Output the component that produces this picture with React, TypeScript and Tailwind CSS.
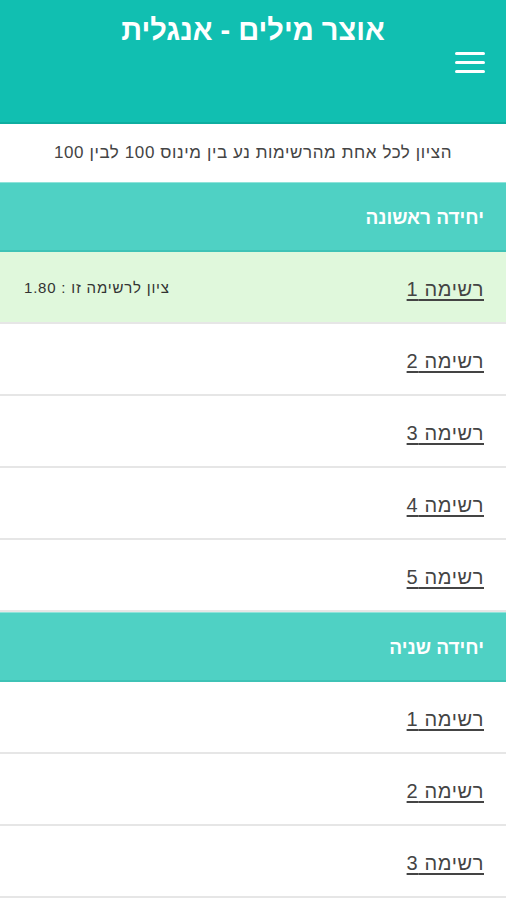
const units = [
  { name: "יחידה ראשונה", lists: [1, 2, 3, 4, 5] },
  { name: "יחידה שניה", lists: [1, 2, 3] },
];

function App() {
  return (
    <div
      dir="rtl"
      className="w-[506px] h-[900px] overflow-hidden bg-white"
      style={{ fontFamily: '"Liberation Sans", Arial, sans-serif' }}
    >
      <header className="h-[124px] bg-[#11bfb1] border-b-2 border-[#0eaea0] flex flex-col items-center">
        <h1 className="mt-[12px] text-[29px] leading-[36px] text-white font-bold">
          אוצר מילים - אנגלית
        </h1>
        <div className="self-start mr-[21px] mt-[4px] flex flex-col gap-[6px]">
          <span className="block w-[30px] h-[3px] bg-white rounded-sm" />
          <span className="block w-[30px] h-[3px] bg-white rounded-sm" />
          <span className="block w-[30px] h-[3px] bg-white rounded-sm" />
        </div>
      </header>
      <div className="h-[58px] flex items-center justify-center text-[17px] tracking-[0.6px] text-[#444]">
        הציון לכל אחת מהרשימות נע בין מינוס 100 לבין 100
      </div>
      {units.map((unit) => (
        <section key={unit.name}>
          <div className="h-[70px] bg-[#4fd1c4] border-t border-[#8fe3da] border-b-2 border-b-[#3fc3b6] flex items-center pt-[3px] px-[22px] text-[19px] font-bold text-white">
            {unit.name}
          </div>
          {unit.lists.map((n, i) => (
            <div
              key={n}
              className={
                "h-[72px] border-b-2 border-[#e6e6e6] flex items-center justify-between pt-[3px] pr-[22px] pl-[24px] " +
                (unit.name === "יחידה ראשונה" && i === 0 ? "bg-[#e0f8dc]" : "bg-white")
              }
            >
              <a href="#" className="text-[20px] tracking-[0.6px] text-[#444] underline underline-offset-[3px]">
                רשימה {n}
              </a>
              {unit.name === "יחידה ראשונה" && i === 0 && (
                <span className="text-[15px] tracking-[0.8px] text-[#333]">ציון לרשימה זו : 1.80</span>
              )}
            </div>
          ))}
        </section>
      ))}
    </div>
  );
}

export default App;
